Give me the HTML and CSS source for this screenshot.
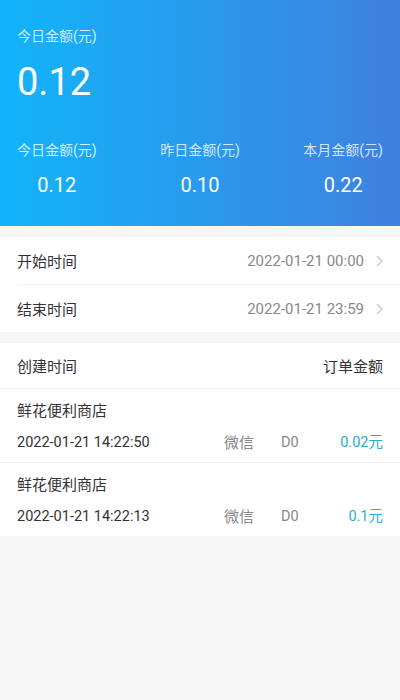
FILE: index.html
```html
<!DOCTYPE html>
<html lang="zh-CN">
<head>
    <meta charset="UTF-8">
    <meta name="viewport" content="width=device-width, initial-scale=1.0">
    <title>交易统计</title>
    <link rel="stylesheet" href="styles.css">
</head>
<body>
    <div class="header">
        <div class="label">今日金额(元)</div>
        <div class="big">0.12</div>
        <div class="stats">
            <div class="stat">
                <div class="label">今日金额(元)</div>
                <div class="value">0.12</div>
            </div>
            <div class="stat">
                <div class="label">昨日金额(元)</div>
                <div class="value">0.10</div>
            </div>
            <div class="stat">
                <div class="label">本月金额(元)</div>
                <div class="value">0.22</div>
            </div>
        </div>
    </div>

    <div class="panel">
        <div class="row">
            <span class="row-title">开始时间</span>
            <span class="row-value">2022-01-21 00:00</span>
            <svg class="arrow" width="7" height="12" viewBox="0 0 7 12"><polyline points="1,1 6,6 1,11" fill="none" stroke="#c4c4c4" stroke-width="1.2"/></svg>
        </div>
        <div class="row">
            <span class="row-title">结束时间</span>
            <span class="row-value">2022-01-21 23:59</span>
            <svg class="arrow" width="7" height="12" viewBox="0 0 7 12"><polyline points="1,1 6,6 1,11" fill="none" stroke="#c4c4c4" stroke-width="1.2"/></svg>
        </div>
    </div>

    <div class="panel orders">
        <div class="orders-head">
            <span>创建时间</span>
            <span>订单金额</span>
        </div>
        <div id="order-list"></div>
    </div>

    <script>
        const orders = [
            { shop: '鲜花便利商店', time: '2022-01-21 14:22:50', pay: '微信', type: 'D0', amount: '0.02' },
            { shop: '鲜花便利商店', time: '2022-01-21 14:22:13', pay: '微信', type: 'D0', amount: '0.1' },
        ];

        const list = document.getElementById('order-list');
        orders.forEach(order => {
            const div = document.createElement('div');
            div.className = 'order';
            div.innerHTML = `
                <div class="shop">${order.shop}</div>
                <div class="order-line">
                    <span class="time">${order.time}</span>
                    <span class="pay">${order.pay}</span>
                    <span class="type">${order.type}</span>
                    <span class="amount">${order.amount}元</span>
                </div>
            `;
            list.appendChild(div);
        });
    </script>
</body>
</html>
```

FILE: styles.css
```css
body { margin: 0; background: #f6f6f6; font-family: Roboto, "Noto Sans CJK SC", sans-serif; color: #333; }
.header { background: linear-gradient(to right, #12b4f9, #4080e0); color: #fff; padding: 26px 17px 28px; }
.header .label { font-size: 14px; line-height: 20px; color: rgba(255, 255, 255, 0.8); }
.big { font-size: 38px; line-height: 44px; margin-top: 14px; }
.stats { display: flex; justify-content: space-between; margin-top: 36px; }
.stat { text-align: center; }
.stat .value { font-size: 20px; line-height: 26px; margin-top: 12px; }
.panel { background: #fff; margin-top: 11px; }
.row { display: flex; align-items: center; height: 47px; margin-left: 17px; padding-right: 17px; border-bottom: 1px solid #f2f2f2; font-size: 15px; }
.row:last-child { border-bottom: none; }
.row-title { flex: 1; color: #333; }
.row-value { color: #888; }
.arrow { margin-left: 12px; }
.orders { margin-top: 11px; }
.orders-head { display: flex; justify-content: space-between; align-items: center; height: 45px; padding: 0 17px; font-size: 15px; border-bottom: 1px solid #f2f2f2; }
.order { padding: 12px 17px 9px; border-bottom: 1px solid #f2f2f2; font-size: 15px; line-height: 20px; }
.order:last-child { border-bottom: none; }
.shop { display: flex; }
.order-line { display: flex; margin-top: 12px; font-size: 14.5px; }
.time { width: 207px; }
.pay { width: 57px; color: #888; font-size: 15px; }
.type { width: 36px; color: #888; }
.amount { flex: 1; text-align: right; color: #2aaed0; }
```
